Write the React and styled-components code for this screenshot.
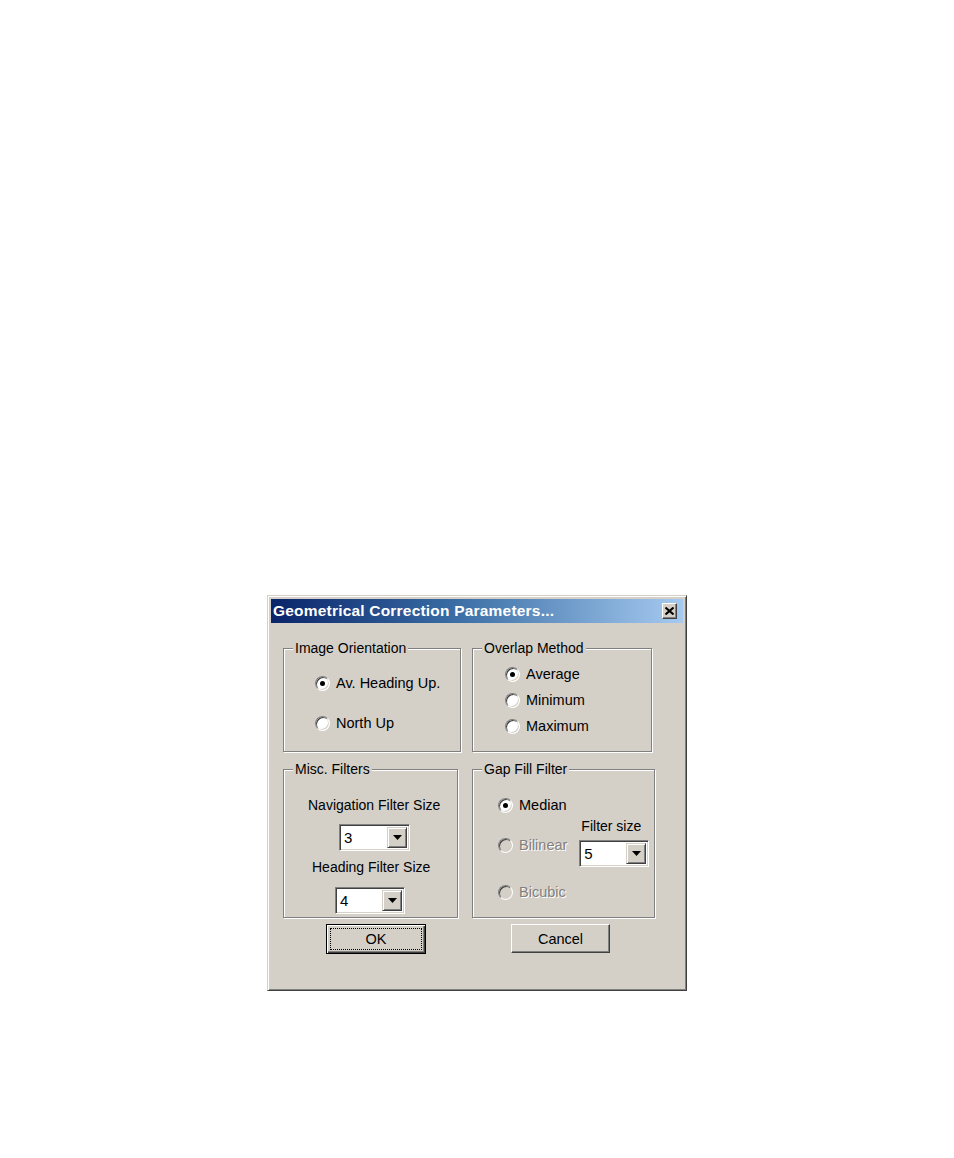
import React from "react";
import styled, { createGlobalStyle } from "styled-components";

const Global = createGlobalStyle`
  html, body { margin: 0; padding: 0; background: #ffffff; }
  body { font-family: "Liberation Sans", Arial, sans-serif; }
`;

const Page = styled.div`
  width: 954px;
  height: 1158px;
  padding: 595px 0 0 267px;
  box-sizing: border-box;
`;

const Dialog = styled.div`
  width: 420px;
  height: 396px;
  box-sizing: border-box;
  background: #d4d0c8;
  border: 1px solid;
  border-color: #d4d0c8 #404040 #404040 #d4d0c8;
  box-shadow: inset 1px 1px 0 #ffffff, inset -1px -1px 0 #808080;
  padding: 3px;
  display: flex;
  flex-direction: column;
  font-size: 14px;
  color: #000;
`;

const TitleBar = styled.div`
  height: 24px;
  display: flex;
  align-items: center;
  justify-content: space-between;
  padding: 0 6px 0 2px;
  background: linear-gradient(to right, #0a246a 0%, #3a6ea5 45%, #a6caf0 100%);
`;

const Title = styled.span`
  color: #ffffff;
  font-weight: bold;
  font-size: 15.5px;
  letter-spacing: 0.2px;
  white-space: nowrap;
`;

const CloseButton = styled.div`
  width: 15px;
  height: 16px;
  box-sizing: border-box;
  background: #d4d0c8;
  border: 1px solid;
  border-color: #ffffff #404040 #404040 #ffffff;
  box-shadow: inset -1px -1px 0 #808080;
  display: flex;
  align-items: center;
  justify-content: center;
`;

const Body = styled.div`
  display: flex;
  flex-direction: column;
  padding: 17px 0 0 12px;
`;

const Row = styled.div`
  display: flex;
  gap: ${(p) => p.$gap}px;
  margin-top: ${(p) => p.$mt || 0}px;
`;

const Group = styled.fieldset`
  margin: 0;
  padding: 0;
  box-sizing: border-box;
  width: ${(p) => p.$w}px;
  height: ${(p) => p.$h}px;
  border: 1px solid #808080;
  box-shadow: 1px 1px 0 #ffffff, inset 1px 1px 0 #ffffff;
  min-width: 0;
  display: flex;
  flex-direction: column;
`;

const Legend = styled.legend`
  margin-left: 9px;
  padding: 0 2px;
  line-height: 16px;
  font-size: 14px;
  background: #d4d0c8;
`;

const RadioList = styled.div`
  display: flex;
  flex-direction: column;
  gap: ${(p) => p.$gap}px;
  padding: ${(p) => p.$pt}px 0 0 ${(p) => p.$pl}px;
`;

const RadioRow = styled.label`
  display: flex;
  align-items: center;
  height: 20px;
  gap: 6px;
  font-size: 14.5px;
  color: ${(p) => (p.$disabled ? "#808080" : "#000")};
  text-shadow: ${(p) => (p.$disabled ? "1px 1px 0 #ffffff" : "none")};
  margin-top: ${(p) => p.$mt || 0}px;
  white-space: nowrap;
`;

const RadioDot = styled.span`
  position: relative;
  width: 15px;
  height: 15px;
  box-sizing: border-box;
  border-radius: 50%;
  border: 1px solid;
  border-color: #808080 #ffffff #ffffff #808080;
  box-shadow: inset 1px 1px 0 #404040, inset -1px -1px 0 #d4d0c8;
  background: ${(p) => (p.$disabled ? "#d4d0c8" : "#ffffff")};
  flex: none;
  &::after {
    content: "";
    display: ${(p) => (p.$checked ? "block" : "none")};
    position: absolute;
    left: 4px;
    top: 4px;
    width: 5px;
    height: 5px;
    border-radius: 50%;
    background: #000;
  }
`;

const Stack = styled.div`
  display: flex;
  flex-direction: column;
  align-items: flex-start;
`;

const Caption = styled.div`
  line-height: 16px;
  white-space: nowrap;
  margin: ${(p) => p.$mt || 0}px 0 0 ${(p) => p.$ml || 0}px;
`;

const Combo = styled.div`
  width: ${(p) => p.$w}px;
  height: 27px;
  box-sizing: border-box;
  border: 1px solid;
  border-color: #808080 #ffffff #ffffff #808080;
  box-shadow: inset 1px 1px 0 #404040, inset -1px -1px 0 #d4d0c8;
  background: #ffffff;
  display: flex;
  align-items: stretch;
  padding: 2px;
  margin: ${(p) => p.$mt || 0}px 0 0 ${(p) => p.$ml || 0}px;
`;

const ComboValue = styled.div`
  flex: 1;
  display: flex;
  align-items: center;
  padding-left: 2px;
  font-size: 15px;
`;

const ComboArrow = styled.div`
  width: 20px;
  box-sizing: border-box;
  background: #d4d0c8;
  border: 1px solid;
  border-color: #d4d0c8 #404040 #404040 #d4d0c8;
  box-shadow: inset 1px 1px 0 #ffffff, inset -1px -1px 0 #808080;
  display: flex;
  align-items: center;
  justify-content: center;
`;

const Split = styled.div`
  display: flex;
`;

const Buttons = styled.div`
  display: flex;
  gap: 85px;
  padding: 6px 0 0 43px;
`;

const Button = styled.div`
  width: ${(p) => p.$w}px;
  height: ${(p) => p.$h}px;
  box-sizing: border-box;
  background: #d4d0c8;
  display: flex;
  align-items: center;
  justify-content: center;
  font-size: 14.5px;
  border: 1px solid;
  border-color: ${(p) =>
    p.$default ? "#000000" : "#ffffff #404040 #404040 #ffffff"};
  box-shadow: ${(p) =>
    p.$default
      ? "inset 1px 1px 0 #ffffff, inset -1px -1px 0 #404040, inset -2px -2px 0 #808080"
      : "inset -1px -1px 0 #808080"};
  padding: 3px;
`;

const Focus = styled.div`
  width: 100%;
  height: 100%;
  box-sizing: border-box;
  border: 1px dotted #000;
  display: flex;
  align-items: center;
  justify-content: center;
`;

const Arrow = () => (
  <svg width="9" height="5" viewBox="0 0 9 5">
    <path d="M0 0h9L4.5 5z" fill="#000" />
  </svg>
);

const CloseX = () => (
  <svg width="9" height="8" viewBox="0 0 9 8">
    <path d="M0.5 0.5L8.5 7.5M8.5 0.5L0.5 7.5" stroke="#000" strokeWidth="2" />
  </svg>
);

const Radio = ({ label, checked, disabled, mt }) => (
  <RadioRow $disabled={disabled} $mt={mt}>
    <RadioDot $checked={checked} $disabled={disabled} />
    {label}
  </RadioRow>
);

export default function App() {
  return (
    <Page>
      <Global />
      <Dialog>
        <TitleBar>
          <Title>Geometrical Correction Parameters...</Title>
          <CloseButton>
            <CloseX />
          </CloseButton>
        </TitleBar>
        <Body>
          <Row $gap={11}>
            <Group $w={178} $h={112}>
              <Legend>Image Orientation</Legend>
              <RadioList $gap={20} $pt={17} $pl={31}>
                <Radio label="Av. Heading Up." checked />
                <Radio label="North Up" />
              </RadioList>
            </Group>
            <Group $w={180} $h={112}>
              <Legend>Overlap Method</Legend>
              <RadioList $gap={6} $pt={8} $pl={32}>
                <Radio label="Average" checked />
                <Radio label="Minimum" />
                <Radio label="Maximum" />
              </RadioList>
            </Group>
          </Row>
          <Row $gap={14} $mt={9}>
            <Group $w={175} $h={157}>
              <Legend>Misc. Filters</Legend>
              <Stack>
                <Caption $mt={20} $ml={24}>Navigation Filter Size</Caption>
                <Combo $w={71} $mt={11} $ml={55}>
                  <ComboValue>3</ComboValue>
                  <ComboArrow>
                    <Arrow />
                  </ComboArrow>
                </Combo>
                <Caption $mt={8} $ml={28}>Heading Filter Size</Caption>
                <Combo $w={70} $mt={12} $ml={51}>
                  <ComboValue>4</ComboValue>
                  <ComboArrow>
                    <Arrow />
                  </ComboArrow>
                </Combo>
              </Stack>
            </Group>
            <Group $w={183} $h={157}>
              <Legend>Gap Fill Filter</Legend>
              <Split>
                <RadioList $gap={0} $pt={18} $pl={25}>
                  <Radio label="Median" checked />
                  <Radio label="Bilinear" disabled mt={20} />
                  <Radio label="Bicubic" disabled mt={27} />
                </RadioList>
                <Stack>
                  <Caption $mt={41} $ml={14}>Filter size</Caption>
                  <Combo $w={70} $mt={6} $ml={12}>
                    <ComboValue>5</ComboValue>
                    <ComboArrow>
                      <Arrow />
                    </ComboArrow>
                  </Combo>
                </Stack>
              </Split>
            </Group>
          </Row>
          <Buttons>
            <Button $w={100} $h={30} $default>
              <Focus>OK</Focus>
            </Button>
            <Button $w={99} $h={29}>Cancel</Button>
          </Buttons>
        </Body>
      </Dialog>
    </Page>
  );
}
